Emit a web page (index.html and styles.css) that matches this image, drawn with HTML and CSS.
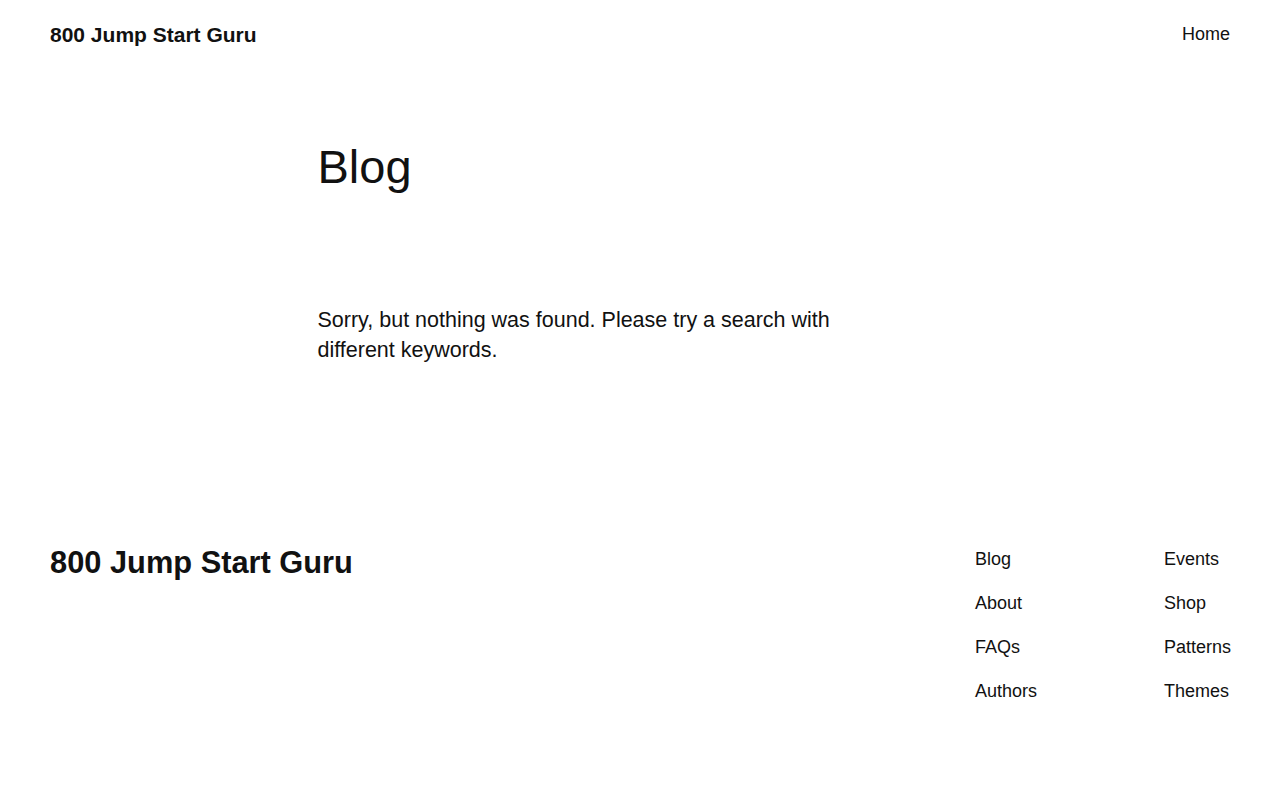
FILE: index.html
```html
<!DOCTYPE html>
<html lang="en">
<head>
<meta charset="utf-8">
<title>Blog – 800 Jump Start Guru</title>
<link rel="stylesheet" href="styles.css">
</head>
<body>
<header class="site-header">
  <a class="site-title" href="#">800 Jump Start Guru</a>
  <nav class="header-nav"><a href="#">Home</a></nav>
</header>
<main class="main">
  <h1 class="page-title">Blog</h1>
  <p class="no-results">Sorry, but nothing was found. Please try a search with different keywords.</p>
</main>
<footer class="site-footer">
  <a class="footer-title" href="#">800 Jump Start Guru</a>
  <nav class="footer-nav">
    <ul class="footer-col">
      <li><a href="#">Blog</a></li>
      <li><a href="#">About</a></li>
      <li><a href="#">FAQs</a></li>
      <li><a href="#">Authors</a></li>
    </ul>
    <ul class="footer-col">
      <li><a href="#">Events</a></li>
      <li><a href="#">Shop</a></li>
      <li><a href="#">Patterns</a></li>
      <li><a href="#">Themes</a></li>
    </ul>
  </nav>
</footer>
</body>
</html>
```
FILE: styles.css
```css
* { box-sizing: border-box; }
html, body { margin: 0; padding: 0; }
body {
  font-family: "Liberation Sans", Arial, sans-serif;
  color: #111111;
  background: #ffffff;
  font-size: 18px;
}
a { color: inherit; text-decoration: none; }

.site-header {
  display: flex;
  justify-content: space-between;
  align-items: center;
  padding: 20px 50px;
  height: 69px;
}
.site-title {
  font-weight: 700;
  font-size: 21px;
}
.header-nav a { font-size: 18px; }

.main {
  width: 645px;
  margin: 0 auto;
  padding-top: 70px;
  min-height: 470px;
}
.page-title {
  margin: 0;
  font-weight: 400;
  font-size: 47px;
  line-height: 1.2;
}
.no-results {
  margin: 110px 0 0;
  max-width: 560px;
  font-size: 21.5px;
  line-height: 30px;
}

.site-footer {
  display: flex;
  justify-content: space-between;
  align-items: flex-start;
  padding: 0 50px;
}
.footer-title {
  font-weight: 700;
  font-size: 30.8px;
  line-height: 1.2;
  margin-top: 6px;
}
.footer-nav {
  display: flex;
  gap: 127px;
  width: 255px;
  margin-top: 10px;
}
.footer-col {
  list-style: none;
  margin: 0;
  padding: 0;
  display: flex;
  flex-direction: column;
  gap: 23px;
}
.footer-col li { font-size: 18px; line-height: 21px; }
```
